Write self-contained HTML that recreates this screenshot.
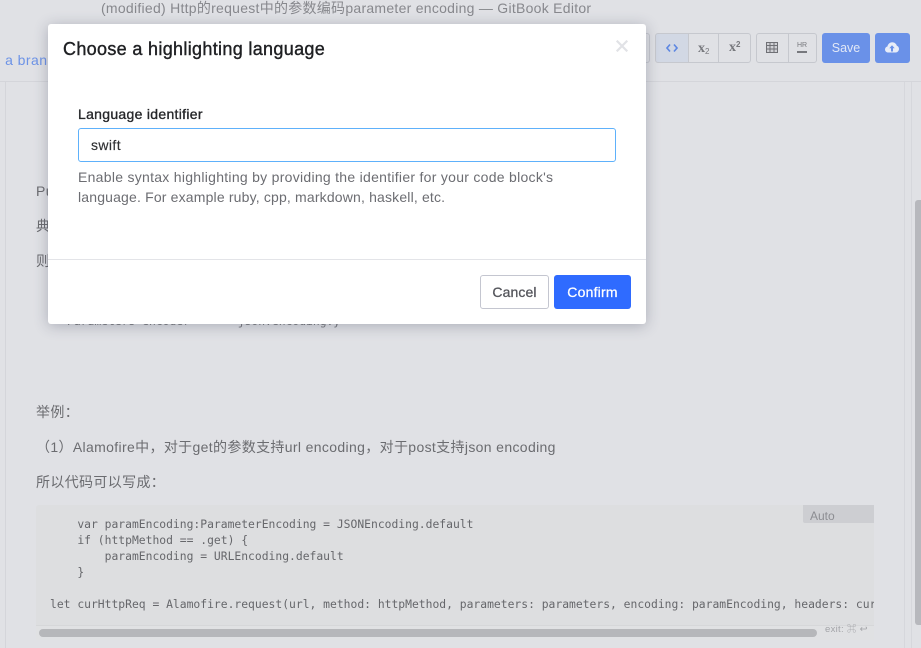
<!DOCTYPE html>
<html>
<head>
<meta charset="utf-8">
<style>
html,body{margin:0;padding:0}
body{width:921px;height:648px;position:relative;overflow:hidden;background:#e0e1e5;font-family:"Liberation Sans","Noto Sans CJK SC",sans-serif;color:#6e6f74}
.a{position:absolute;white-space:pre}
.t{font-size:14px;line-height:20px;color:#6b6c70;letter-spacing:.35px}
.b{position:absolute;top:33px;height:30px;box-sizing:border-box;border:1px solid #c6c8ce;background:#e0e1e5}
.m{font-family:"DejaVu Sans Mono","Liberation Mono",monospace;font-size:11.35px;line-height:16px;color:#66676b}
</style>
</head>
<body>
<div class="a" style="left:101px;top:-2px;font-size:14px;line-height:20px;letter-spacing:.27px;color:#87888d">(modified) Http的request中的参数编码parameter encoding — GitBook Editor</div>
<div class="a" style="left:-7.5px;top:50px;font-size:14px;line-height:20px;letter-spacing:.45px;color:#6d93e6">e a bran</div>
<div class="a" style="left:0;top:81px;width:921px;height:1px;background:#d4d5da"></div>
<div class="a" style="left:5px;top:82px;width:1px;height:566px;background:#d4d5da"></div>
<div class="a" style="left:904px;top:82px;width:1px;height:566px;background:#d6d7dc"></div>
<div class="a" style="left:911px;top:82px;width:1px;height:566px;background:#d6d7dc"></div>
<div class="a" style="left:915px;top:200px;width:6px;height:425px;background:#b7b8bd;border-radius:3px 0 0 3px"></div>

<!-- toolbar -->
<div class="b" style="left:630px;width:20px;border-radius:3px"></div>
<div class="b" style="left:655px;width:34px;background:#d2d8e4;border-radius:3px 0 0 3px"></div>
<div class="b" style="left:688px;width:31px"></div>
<div class="b" style="left:718px;width:33px;border-radius:0 3px 3px 0"></div>
<div class="b" style="left:756px;width:33px;border-radius:3px 0 0 3px"></div>
<div class="b" style="left:788px;width:29px;border-radius:0 3px 3px 0"></div>
<svg class="a" style="left:666px;top:43px" width="12" height="10" viewBox="0 0 12 10"><path d="M4 1.5 1 5l3 3.5M8 1.5 11 5 8 8.500" fill="none" stroke="#5d87e2" stroke-width="1.6"/></svg>
<div class="a" style="left:698px;top:40px;font-family:'Liberation Serif',serif;font-size:14px;line-height:18px;font-weight:bold;color:#77787d">x<span style="font-family:'Liberation Sans',sans-serif;font-size:8px;font-weight:normal;position:relative;top:2px">2</span></div>
<div class="a" style="left:729px;top:39px;font-family:'Liberation Serif',serif;font-size:14px;line-height:18px;font-weight:bold;color:#77787d">x<span style="font-family:'Liberation Sans',sans-serif;font-size:8px;position:relative;top:-4px">2</span></div>
<svg class="a" style="left:766px;top:42px" width="12" height="11" viewBox="0 0 12 11"><path d="M.5.5h11v10H.5zM.5 3.500h11M.5 7h11M4 .5v10M8 .5v10" fill="#d0d1d5" stroke="#6f7075" stroke-width="1"/></svg>
<div class="a" style="left:797px;top:42px;font-size:7px;line-height:8px;color:#77787d">HR</div>
<div class="a" style="left:797px;top:51px;width:10px;height:1.5px;background:#77787d"></div>
<div class="a" style="left:822px;top:33px;width:48px;height:30px;background:#6a91e8;border-radius:3px;color:#e2e8f6;font-size:12.5px;line-height:30px;text-align:center">Save</div>
<div class="a" style="left:875px;top:33px;width:35px;height:30px;background:#6a91e8;border-radius:3px"></div>
<svg class="a" style="left:885px;top:42px" width="14" height="11" viewBox="0 0 14 11"><path d="M3.200 10.500C1.400 10.500 0 9.200 0 7.500c0-1.500 1-2.700 2.400-3C2.800 2 4.800 .3 7.200 .3c2.200 0 4 1.400 4.600 3.400 1.300.4 2.200 1.700 2.200 3.200 0 2-1.500 3.600-3.400 3.600z" fill="#e8edf8"/><path d="M7 3.200 4.300 6.200H6V9.500H8V6.200H9.700z" fill="#6a91e8"/></svg>

<!-- body text -->
<div class="a t" style="left:36px;top:181px">Pu</div>
<div class="a t" style="left:36px;top:216px">典</div>
<div class="a t" style="left:36px;top:251px">则</div>
<div class="a m" style="left:67px;top:312.5px;color:#77787c">Parameters encoder       json.encoding.y</div>
<div class="a t" style="left:36px;top:402px">举例：</div>
<div class="a t" style="left:36px;top:437px">（1）Alamofire中，对于get的参数支持url encoding，对于post支持json encoding</div>
<div class="a t" style="left:36px;top:472px">所以代码可以写成：</div>

<!-- code block -->
<div class="a" style="left:36px;top:505px;width:838px;height:135px;background:#dddee0;border-radius:3px 0 0 0;overflow:hidden">
<div class="a m" style="left:14px;top:11px">    var paramEncoding:ParameterEncoding = JSONEncoding.default
    if (httpMethod == .get) {
        paramEncoding = URLEncoding.default
    }

let curHttpReq = Alamofire.request(url, method: httpMethod, parameters: parameters, encoding: paramEncoding, headers: curHeaders)</div>
<div class="a" style="left:0;top:120px;width:838px;height:15px;background:#e0e1e3;border-top:1px solid #d6d7d9;box-sizing:border-box"></div>
<div class="a" style="left:3px;top:124px;width:778px;height:8px;background:#b6b7ba;border-radius:4px"></div>
<div class="a" style="left:767px;top:0;width:71px;height:18px;background:#cdced2;border-radius:0 0 0 2px;color:#8c8d92;font-size:12px;line-height:23px;text-indent:7px">Auto</div>
<div class="a" style="left:789px;top:118px;font-size:9.5px;line-height:14px;color:#a3a4a8;letter-spacing:.3px">exit: ⌘ ↩</div>
</div>

<!-- modal -->
<div class="a" style="left:48px;top:24px;width:598px;height:300px;background:#fff;border-radius:3px;box-shadow:0 2px 14px rgba(60,65,90,.32)">
<div class="a" style="left:15px;top:13px;font-size:18px;line-height:24px;letter-spacing:.33px;color:#1f2023;-webkit-text-stroke:.4px #1f2023">Choose a highlighting language</div>
<svg class="a" style="left:568px;top:16px" width="12" height="12" viewBox="0 0 12 12"><path d="M.7.7 11.300 11.300M11.300.7.7 11.300" stroke="#e1e2e6" stroke-width="2.200" fill="none"/></svg>
<div class="a" style="left:30px;top:80px;font-size:14px;line-height:20px;letter-spacing:.3px;color:#26272a;-webkit-text-stroke:.35px #26272a">Language identifier</div>
<div class="a" style="left:30px;top:104px;width:538px;height:34px;box-sizing:border-box;border:1px solid #5eb1fb;border-radius:3px;font-size:14px;line-height:32px;padding-left:12px;letter-spacing:.4px;color:#2f3033;-webkit-text-stroke:.15px #2f3033">swift</div>
<div class="a" style="left:30px;top:143px;font-size:14px;line-height:20px;letter-spacing:.28px;color:#6c6d72">Enable syntax highlighting by providing the identifier for your code block's</div>
<div class="a" style="left:30px;top:163px;font-size:14px;line-height:20px;letter-spacing:.17px;color:#6c6d72">language. For example ruby, cpp, markdown, haskell, etc.</div>
<div class="a" style="left:0;top:235px;width:598px;height:1px;background:#e3e4e8"></div>
<div class="a" style="left:432px;top:251px;width:69px;height:34px;box-sizing:border-box;border:1px solid #c4c6d0;border-radius:3px;text-align:center;font-size:14px;line-height:32px;letter-spacing:.1px;color:#55565c;-webkit-text-stroke:.3px #55565c">Cancel</div>
<div class="a" style="left:506px;top:251px;width:77px;height:34px;background:#2f6bff;border-radius:3px;text-align:center;font-size:14px;line-height:34px;letter-spacing:.2px;color:#fff;-webkit-text-stroke:.25px #fff">Confirm</div>
</div>
</body>
</html>
